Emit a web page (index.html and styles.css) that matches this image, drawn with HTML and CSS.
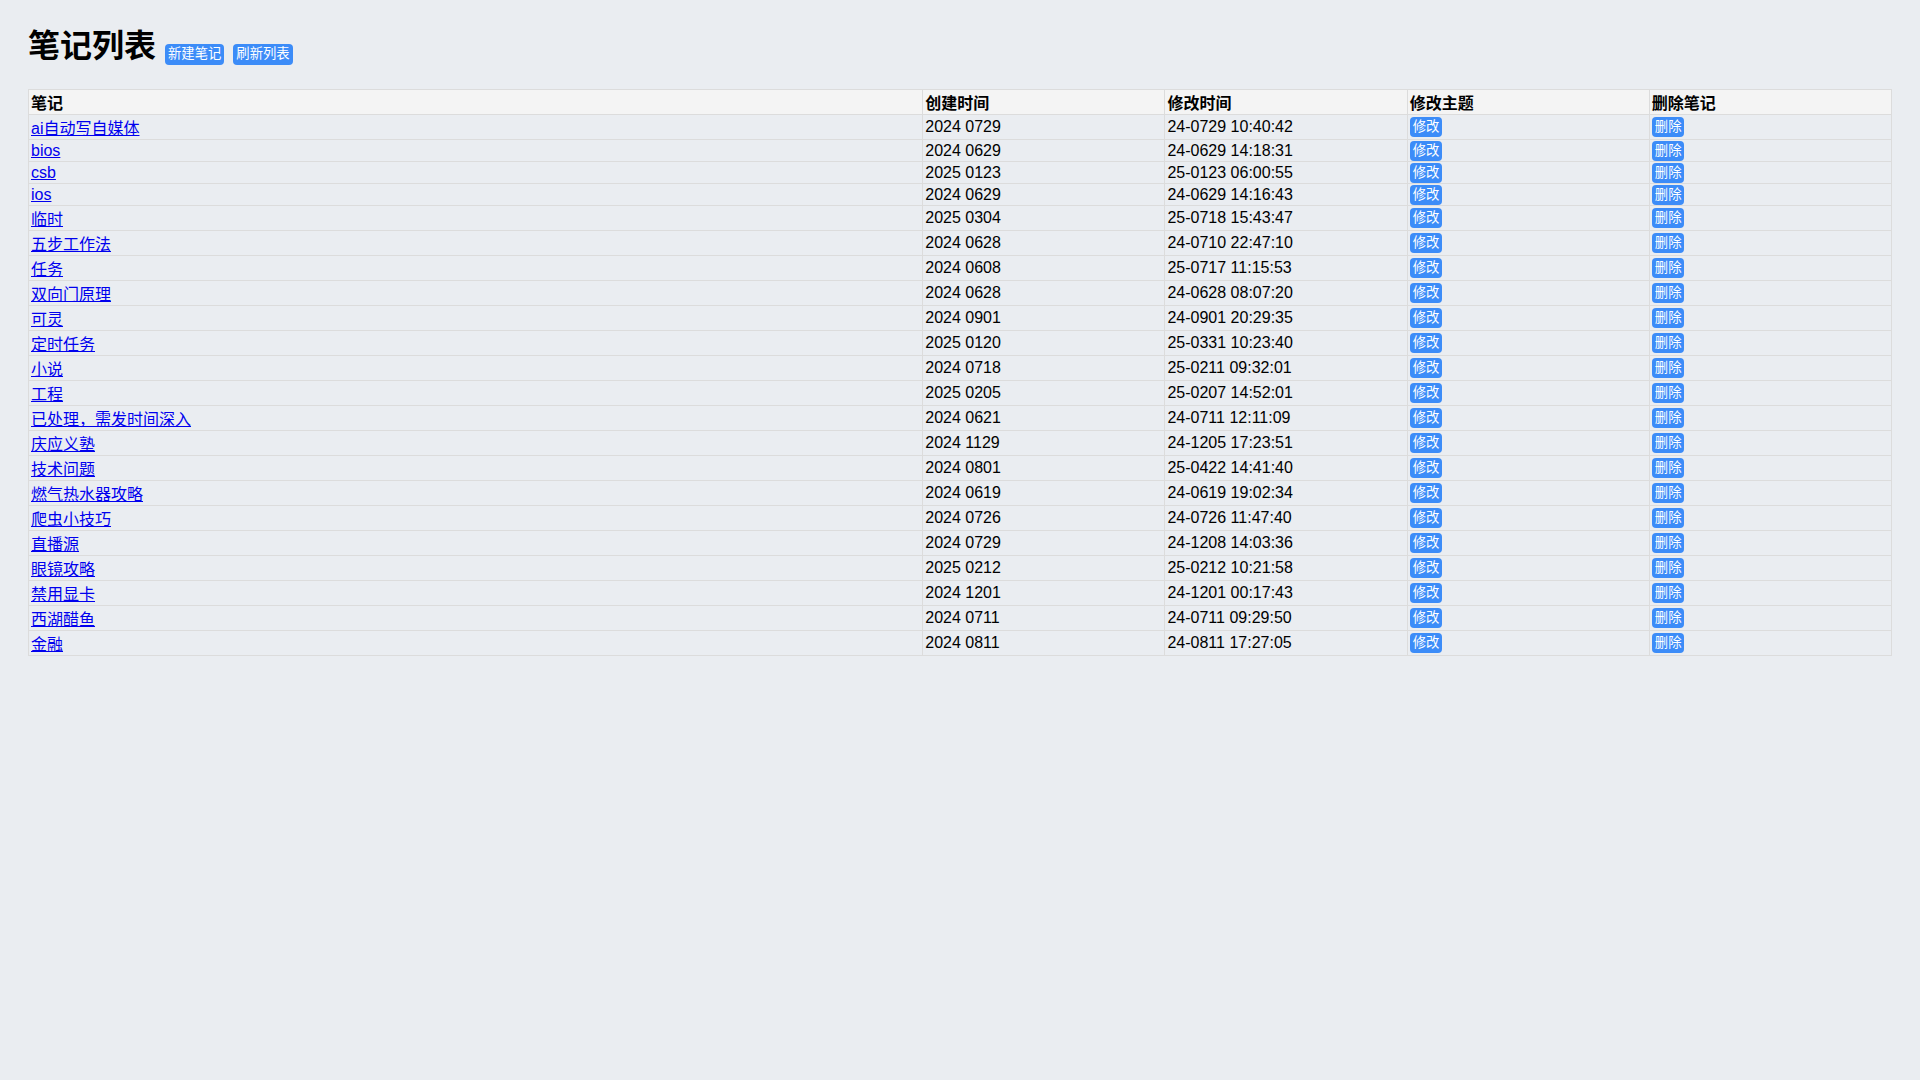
FILE: index.html
```html
<!DOCTYPE html>
<html lang="zh-CN">
<head>
<meta charset="utf-8">
<title>笔记列表</title>
<link rel="stylesheet" href="styles.css">
</head>
<body>
<div class="page">
  <div class="title-bar">
    <h1 class="title">笔记列表</h1>
    <button class="btn">新建笔记</button>
    <button class="btn">刷新列表</button>
  </div>
  <table class="notes">
    <thead>
      <tr><th class="c-name">笔记</th><th class="c-col">创建时间</th><th class="c-col">修改时间</th><th class="c-col">修改主题</th><th class="c-col">删除笔记</th></tr>
    </thead>
    <tbody>
      <tr><td><a href="#">ai自动写自媒体</a></td><td>2024 0729</td><td>24-0729 10:40:42</td><td><button class="btn">修改</button></td><td><button class="btn">删除</button></td></tr>
      <tr><td><a href="#">bios</a></td><td>2024 0629</td><td>24-0629 14:18:31</td><td><button class="btn">修改</button></td><td><button class="btn">删除</button></td></tr>
      <tr><td><a href="#">csb</a></td><td>2025 0123</td><td>25-0123 06:00:55</td><td><button class="btn">修改</button></td><td><button class="btn">删除</button></td></tr>
      <tr><td><a href="#">ios</a></td><td>2024 0629</td><td>24-0629 14:16:43</td><td><button class="btn">修改</button></td><td><button class="btn">删除</button></td></tr>
      <tr><td><a href="#">临时</a></td><td>2025 0304</td><td>25-0718 15:43:47</td><td><button class="btn">修改</button></td><td><button class="btn">删除</button></td></tr>
      <tr><td><a href="#">五步工作法</a></td><td>2024 0628</td><td>24-0710 22:47:10</td><td><button class="btn">修改</button></td><td><button class="btn">删除</button></td></tr>
      <tr><td><a href="#">任务</a></td><td>2024 0608</td><td>25-0717 11:15:53</td><td><button class="btn">修改</button></td><td><button class="btn">删除</button></td></tr>
      <tr><td><a href="#">双向门原理</a></td><td>2024 0628</td><td>24-0628 08:07:20</td><td><button class="btn">修改</button></td><td><button class="btn">删除</button></td></tr>
      <tr><td><a href="#">可灵</a></td><td>2024 0901</td><td>24-0901 20:29:35</td><td><button class="btn">修改</button></td><td><button class="btn">删除</button></td></tr>
      <tr><td><a href="#">定时任务</a></td><td>2025 0120</td><td>25-0331 10:23:40</td><td><button class="btn">修改</button></td><td><button class="btn">删除</button></td></tr>
      <tr><td><a href="#">小说</a></td><td>2024 0718</td><td>25-0211 09:32:01</td><td><button class="btn">修改</button></td><td><button class="btn">删除</button></td></tr>
      <tr><td><a href="#">工程</a></td><td>2025 0205</td><td>25-0207 14:52:01</td><td><button class="btn">修改</button></td><td><button class="btn">删除</button></td></tr>
      <tr><td><a href="#">已处理，需发时间深入</a></td><td>2024 0621</td><td>24-0711 12:11:09</td><td><button class="btn">修改</button></td><td><button class="btn">删除</button></td></tr>
      <tr><td><a href="#">庆应义塾</a></td><td>2024 1129</td><td>24-1205 17:23:51</td><td><button class="btn">修改</button></td><td><button class="btn">删除</button></td></tr>
      <tr><td><a href="#">技术问题</a></td><td>2024 0801</td><td>25-0422 14:41:40</td><td><button class="btn">修改</button></td><td><button class="btn">删除</button></td></tr>
      <tr><td><a href="#">燃气热水器攻略</a></td><td>2024 0619</td><td>24-0619 19:02:34</td><td><button class="btn">修改</button></td><td><button class="btn">删除</button></td></tr>
      <tr><td><a href="#">爬虫小技巧</a></td><td>2024 0726</td><td>24-0726 11:47:40</td><td><button class="btn">修改</button></td><td><button class="btn">删除</button></td></tr>
      <tr><td><a href="#">直播源</a></td><td>2024 0729</td><td>24-1208 14:03:36</td><td><button class="btn">修改</button></td><td><button class="btn">删除</button></td></tr>
      <tr><td><a href="#">眼镜攻略</a></td><td>2025 0212</td><td>25-0212 10:21:58</td><td><button class="btn">修改</button></td><td><button class="btn">删除</button></td></tr>
      <tr><td><a href="#">禁用显卡</a></td><td>2024 1201</td><td>24-1201 00:17:43</td><td><button class="btn">修改</button></td><td><button class="btn">删除</button></td></tr>
      <tr><td><a href="#">西湖醋鱼</a></td><td>2024 0711</td><td>24-0711 09:29:50</td><td><button class="btn">修改</button></td><td><button class="btn">删除</button></td></tr>
      <tr><td><a href="#">金融</a></td><td>2024 0811</td><td>24-0811 17:27:05</td><td><button class="btn">修改</button></td><td><button class="btn">删除</button></td></tr>
    </tbody>
  </table>
</div>
</body>
</html>
```
FILE: styles.css
```css
html, body {
  margin: 0;
  padding: 0;
  background: #eaedf1;
}
body {
  font-family: "Liberation Sans", "Noto Sans CJK SC", sans-serif;
  font-size: 16px;
  color: #000;
}
.page {
  padding: 20px 28px;
}
.title-bar {
  display: flex;
  align-items: center;
  gap: 9px;
  height: 48px;
  padding-top: 2px;
  margin-bottom: 19px;
}
.title {
  margin: 0;
  font-size: 32px;
  font-weight: bold;
  line-height: 40px;
}
.btn {
  font-family: "Liberation Sans", "Noto Sans CJK SC", sans-serif;
  font-size: 13.33px;
  line-height: 20px;
  height: 20px;
  padding: 0 3px;
  border: none;
  border-radius: 4px;
  background: #3c8cf8;
  color: #fff;
  vertical-align: middle;
}
.title-bar .btn {
  margin-top: 16px;
  height: 21px;
  padding: 0 3px;
}
.notes {
  width: 100%;
  border-collapse: collapse;
  border: 1px solid #dcdcdc;
}
.notes th, .notes td {
  border: 1px solid #dcdcdc;
  padding: 0 2px;
  text-align: left;
  vertical-align: middle;
}
.notes th {
  background: #f4f4f4;
  font-weight: bold;
  height: 24px;
}
.c-col {
  width: 13%;
}
.notes td {
  height: 21px;
}
.notes a {
  color: #0000ee;
}
```
